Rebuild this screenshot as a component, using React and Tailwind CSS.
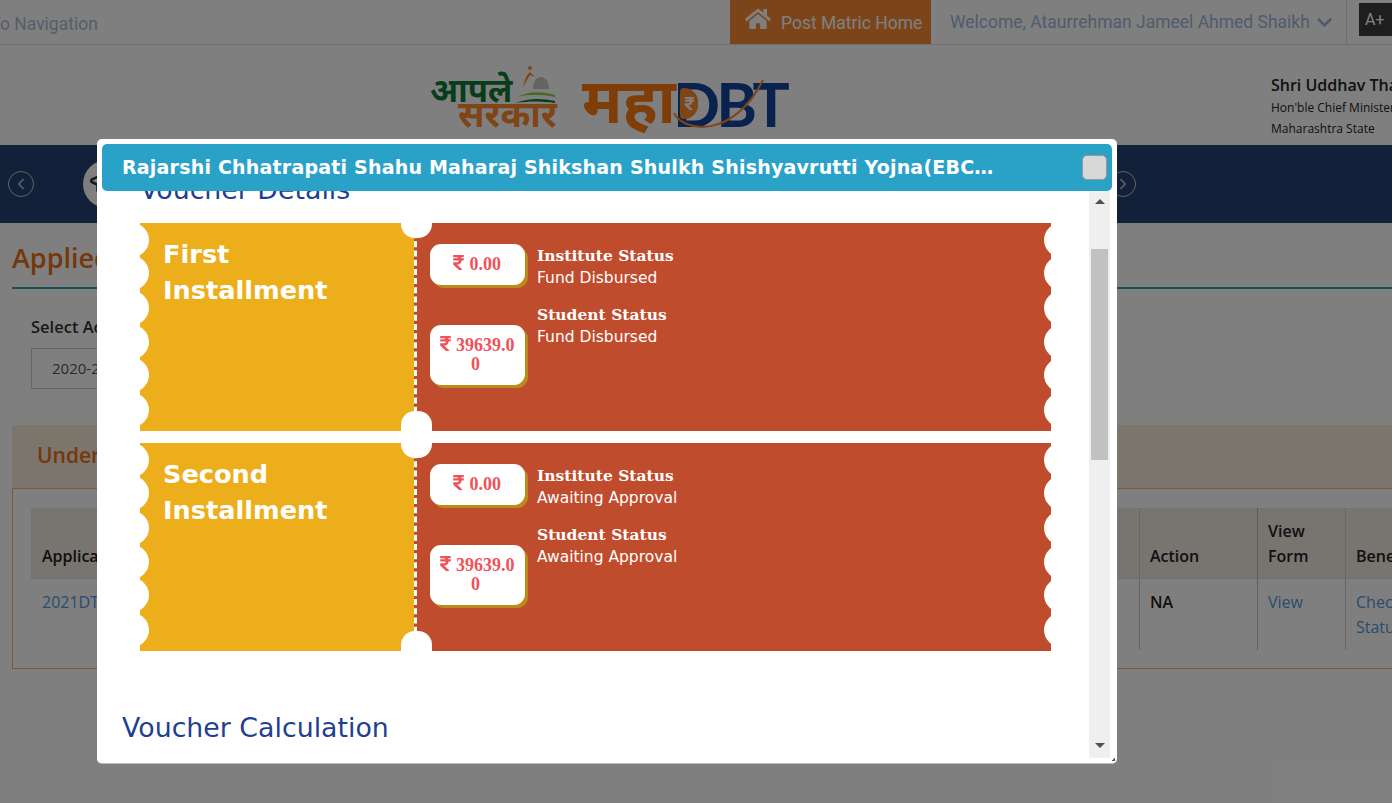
import React from "react";
import { FaHome, FaChevronDown, FaRupeeSign } from "react-icons/fa";
import { ChevronLeft, ChevronRight, GraduationCap } from "lucide-react";

const scallops = [17, 50, 85, 119, 152, 187];

function Amount({ value }) {
  return (
    <div className="w-[95px] rounded-[11px] bg-white pt-[10px] pr-[10px] pb-[10px] pl-[6px] text-center font-['Liberation_Serif',serif] text-[18px] leading-[19.5px] font-bold break-all text-[#f0525a] shadow-[3px_3px_0_#bb8a18]">
      <FaRupeeSign className="-mr-[2px] inline-block align-[-1px] text-[17px]" /> {value}
    </div>
  );
}

function Status({ label, value }) {
  return (
    <div>
      <div className="font-['DejaVu_Serif',serif] text-[15.5px] leading-[22px] font-bold">{label}</div>
      <div className="font-['DejaVu_Sans',sans-serif] text-[15.5px] leading-[22px]">{value}</div>
    </div>
  );
}

function Ticket({ first, status }) {
  return (
    <div className="relative flex h-52 w-[911px] overflow-hidden text-white">
      <div className="w-[274px] bg-[#edae1c] pt-[13px] pl-[23px] font-['DejaVu_Sans',sans-serif] text-[25.6px] leading-9 font-bold">
        <div>{first}</div>
        <div>Installment</div>
      </div>
      <div className="flex flex-1 gap-[12px] border-l-[3px] border-dashed border-white bg-[#bf4c2d] pt-[21px] pl-[13px]">
        <div className="flex flex-col gap-10">
          <Amount value="0.00" />
          <Amount value="39639.00" />
        </div>
        <div className="flex flex-col gap-[15px] pt-px">
          <Status label="Institute Status" value={status} />
          <Status label="Student Status" value={status} />
        </div>
      </div>
      {scallops.map((y) => (
        <React.Fragment key={y}>
          <span style={{ top: y - 17 }} className="absolute -left-[25px] h-[34px] w-[34px] rounded-full bg-white" />
          <span style={{ top: y - 17 }} className="absolute -right-[27px] h-[34px] w-[34px] rounded-full bg-white" />
        </React.Fragment>
      ))}
      <span className="absolute -top-[15px] left-[261px] h-[30px] w-[31px] rounded-[14px] bg-white" />
      <span className="absolute -bottom-[15px] left-[261px] h-[35px] w-[31px] rounded-[14px] bg-white" />
    </div>
  );
}

function Modal() {
  return (
    <div className="absolute top-[139px] left-[97px] flex h-[625px] w-[1020px] flex-col rounded-[5px] border-b border-[#bbbbbb] bg-white p-[5px]">
      <div className="flex h-[47px] shrink-0 items-center justify-between rounded-[5px] bg-[#2aa2c8] pr-[5px] pl-5">
        <div className="w-[876px] truncate font-['DejaVu_Sans',sans-serif] text-[19px] tracking-[0.2px] font-bold text-white">
          Rajarshi Chhatrapati Shahu Maharaj Shikshan Shulkh Shishyavrutti Yojna(EBC) Scheme
        </div>
        <div className="h-[25px] w-[25px] rounded-[5px] border border-[#999999] bg-[#d8d8d8]" />
      </div>
      <div className="flex h-[567px] shrink-0">
        <div className="w-[987px] overflow-hidden">
          <div className="-mt-[17px] mb-[18px] ml-[38px] font-['DejaVu_Sans',sans-serif] text-[26.8px] leading-[31px] text-[#1f3f8f]">Voucher Details</div>
          <div className="ml-[38px] flex flex-col gap-3">
            <Ticket first="First" status="Fund Disbursed" />
            <Ticket first="Second" status="Awaiting Approval" />
          </div>
          <div className="mt-[59px] ml-5 font-['DejaVu_Sans',sans-serif] text-[26.8px] leading-9 text-[#1f3f8f]">Voucher Calculation</div>
        </div>
        <div className="flex w-[21px] flex-col items-center bg-[#efefef]">
          <span className="mt-[8px] h-0 w-0 border-x-[5px] border-b-[5px] border-x-transparent border-b-[#505050]" />
          <div className="mt-[45px] h-[211px] w-[17px] bg-[#c1c1c1]" />
          <span className="mt-[283px] h-0 w-0 border-x-[5px] border-t-[5px] border-x-transparent border-t-[#505050]" />
        </div>
      </div>
      <span className="absolute right-[2px] bottom-[2px] h-[3px] w-[3px] bg-[linear-gradient(135deg,transparent_50%,#555_50%)]" />
    </div>
  );
}

function Logo() {
  return (
    <div className="flex items-start gap-[27px]">
      <div className="relative h-[70px] w-[125px] font-['Noto_Sans','DejaVu_Sans',sans-serif] font-bold">
        <span className="absolute top-[2px] left-0 text-[33px] leading-[44px] whitespace-nowrap text-[#0f7a36]">आपले</span>
        <span className="absolute top-[27px] left-[28px] text-[36px] leading-[42px] whitespace-nowrap text-[#ff8a2c]">सरकार</span>
        <svg viewBox="0 0 40 42" className="absolute -top-[1px] left-[85px] h-[42px] w-[40px]">
          <circle cx="15" cy="3" r="2" fill="#ff8a2c" />
          <path d="M8 22 C10 14 12 9 15 7 L20 12 L15 10 C13 13 11 17 8 22Z" fill="#ff8a2c" />
          <path d="M18 24 C18 16 22 12 26 12 C30 12 34 16 34 24Z" fill="#c9c9c9" />
          <path d="M2 32 C14 26 26 26 40 30 L40 32 C26 29 14 29 2 32Z" fill="#8fd03e" />
          <path d="M0 38 C14 33 26 33 40 36 L40 38 C26 36 14 36 0 38Z" fill="#0f7a36" />
        </svg>
      </div>
      <div className="mt-[12px] flex h-[50px] items-center">
        <span className="mb-[8px] w-[91px] font-['Noto_Sans','DejaVu_Sans',sans-serif] text-[62px] leading-[50px] font-bold whitespace-nowrap text-[#ff7a10]">महा</span>
        <div className="relative flex h-[50px] items-center">
          <span className="font-['Lato',sans-serif] text-[62px] leading-[50px] font-bold tracking-[-4px] text-[#14479c]">DBT</span>
          <span className="absolute top-[10px] left-[7px] flex h-[31px] w-[18px] items-center justify-center rounded-l-[4px] rounded-r-[14px] bg-[#ff8a2c]">
            <FaRupeeSign className="text-[15px] text-white" />
          </span>
          <svg viewBox="0 0 114 56" className="absolute top-0 left-0 h-[56px] w-[114px]">
            <path d="M1 35 C10 54 60 62 90 2" fill="none" stroke="#ff8a2c" strokeWidth="2" />
          </svg>
        </div>
      </div>
    </div>
  );
}

export default function App() {
  return (
    <div className="relative h-[803px] w-[1392px] overflow-hidden bg-white font-['Open_Sans',sans-serif]">
      <div className="flex h-[45px] items-stretch border-b border-[#dddddd] font-['Roboto',sans-serif] text-[17.5px] text-[#a0b8d8]">
        <div className="-ml-[47px] flex w-[777px] shrink-0 items-center pt-[5px] text-[#aabcd5]">Skip To Navigation</div>
        <div className="flex w-[201px] shrink-0 items-center gap-[10px] bg-[#f88b33] pl-[15px] text-white">
          <FaHome className="mb-[6px] text-[26px]" />
          <span className="pt-[3px]">Post Matric Home</span>
        </div>
        <div className="flex w-[416px] shrink-0 items-center gap-[6px] border-r border-[#dddddd] pl-[19px]">
          <span>Welcome, Ataurrehman Jameel Ahmed Shaikh</span>
          <FaChevronDown className="text-[17px]" />
        </div>
        <div className="ml-3 flex h-[33px] w-[40px] shrink-0 translate-y-[3px] items-center bg-[#3c3c3c] pl-[6px] text-[16px] text-white">A+</div>
      </div>
      <div className="flex h-[100px] items-start">
        <div className="mt-[21px] ml-[430px] w-[841px] shrink-0"><Logo /></div>
        <div className="mt-[28px] shrink-0 font-['Open_Sans',sans-serif] whitespace-nowrap text-[#222222]">
          <div className="text-[16px] leading-[24px] font-semibold">Shri Uddhav Thackeray</div>
          <div className="text-[12px] leading-[21px]">Hon'ble Chief Minister</div>
          <div className="text-[12px] leading-[21px]">Maharashtra State</div>
        </div>
      </div>
      <div className="flex h-[78px] items-center bg-[#244074] text-[#c8c8c8]">
        <span className="ml-2 flex h-[26px] w-[26px] shrink-0 items-center justify-center rounded-full border border-[#c8c8c8]"><ChevronLeft size={18} /></span>
        <span className="ml-[49px] flex h-12 w-12 shrink-0 items-center justify-center rounded-full bg-white text-[#333333]"><GraduationCap size={38} strokeWidth={1.6} /></span>
        <span className="ml-[979px] flex h-[26px] w-[26px] shrink-0 items-center justify-center rounded-full border border-[#c8c8c8]"><ChevronRight size={18} /></span>
      </div>
      <div className="mt-[15px] ml-3 h-[51px] border-b-2 border-[#2aa5b0] text-[27px] leading-[40px] font-semibold text-[#e8701a]">Applied Scheme History</div>
      <div className="mt-[28px] ml-[31px] text-[16.5px] leading-5 font-semibold text-[#333333]">Select Academic Year</div>
      <div className="mt-[11px] ml-[31px] flex h-[41px] w-[300px] items-center border border-[#cccccc] pl-5 text-[15px] text-[#555555]">2020-2021</div>
      <div className="mt-[36px] ml-3 w-[1500px]">
        <div className="flex h-[63px] items-center bg-[#f7ead9] pb-[2px] pl-[25px] text-[21px] font-semibold text-[#e8701a]">Under Process Applications</div>
        <div className="h-[181px] border border-[#f0b27a] px-[18px] pt-[19px]">
          <div className="flex h-[71px] border-b border-[#dddddd] bg-[#f0e8df] text-[16px] leading-[25px] font-semibold text-[#222222]">
            <div className="flex w-[1108px] items-end pb-[9px] pl-[11px]">Application ID</div>
            <div className="flex w-[118px] items-end border-l border-[#cccccc] pb-[9px] pl-[10px]">Action</div>
            <div className="flex w-[88px] items-end border-l border-[#bbbbbb] pb-[9px] pl-[10px]">View<br />Form</div>
            <div className="flex flex-1 items-end border-l border-[#cccccc] pb-[9px] pl-[10px]">Beneficiary</div>
          </div>
          <div className="flex h-[71px] text-[16px] leading-[25px] text-[#5099dd]">
            <div className="w-[1108px] pt-[11px] pl-[11px]">2021DT0001</div>
            <div className="w-[118px] border-l border-[#cccccc] pt-[11px] pl-[10px] font-semibold text-[#222222]">NA</div>
            <div className="w-[88px] border-l border-[#bbbbbb] pt-[11px] pl-[10px]">View</div>
            <div className="flex-1 border-l border-[#cccccc] pt-[11px] pl-[10px]">Check<br />Status</div>
          </div>
        </div>
      </div>
      <div className="absolute inset-0 bg-black/50" />
      <Modal />
    </div>
  );
}
